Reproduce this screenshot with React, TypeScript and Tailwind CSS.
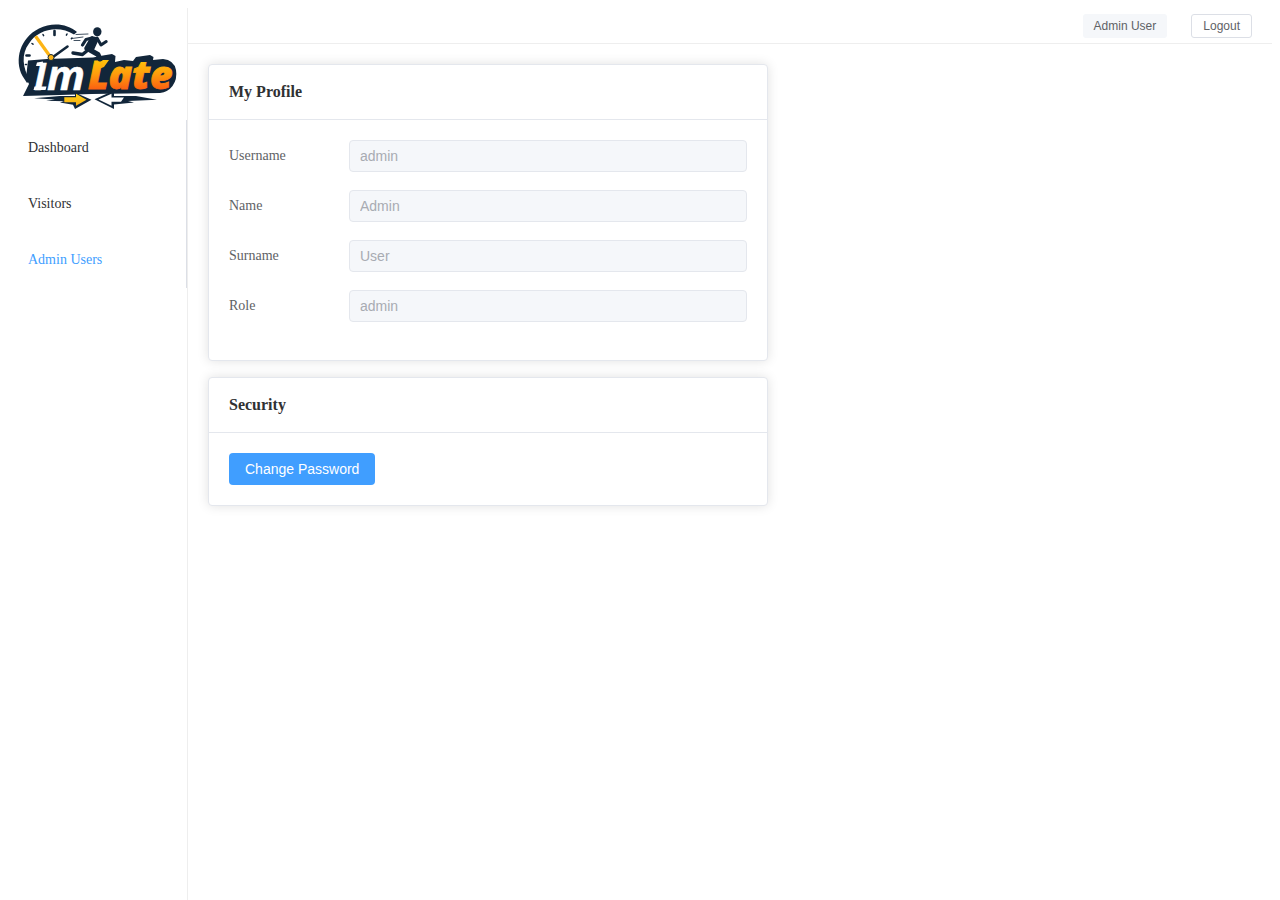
import React from "react";

const navItems = [
  { label: "Dashboard", active: false },
  { label: "Visitors", active: false },
  { label: "Admin Users", active: true },
];

const profileFields = [
  { id: "username", label: "Username", value: "admin" },
  { id: "name", label: "Name", value: "Admin" },
  { id: "surname", label: "Surname", value: "User" },
  { id: "role", label: "Role", value: "admin" },
];

function Logo() {
  return (
    <svg viewBox="8 8 179 112" className="block w-full" role="img" aria-label="ImLate">
      <defs>
        <linearGradient id="flame" gradientUnits="userSpaceOnUse" x1="0" y1="60" x2="0" y2="91">
          <stop offset="0" stopColor="#ffc20a" />
          <stop offset="0.45" stopColor="#ff9d0c" />
          <stop offset="1" stopColor="#fb5a12" />
        </linearGradient>
        <linearGradient id="gold" x1="0" y1="0" x2="0" y2="1">
          <stop offset="0" stopColor="#ffd21a" />
          <stop offset="1" stopColor="#f8ac10" />
        </linearGradient>
      </defs>

      {/* clock face */}
      <path
        d="M77 32 C67 23.500 52 22 39 28.500 C20 38 14 60 22.500 76 L27 83 L30 80 C22.500 68 21 54 29 43.500 C38 29 59 25 74 34.500 Z"
        fill="#12263a"
      />
      <g stroke="#12263a" strokeLinecap="round">
        <path d="M54.500 31v4" strokeWidth="2.600" />
        <path d="M43 34.500l.6 1.200M67 34l-.6 1.200M32 43.500l1 .7M72 38l-.6.6" strokeWidth="1.500" />
        <path d="M26.500 55.500h3" strokeWidth="2.600" />
        <path d="M25.500 64.500h1" strokeWidth="1.600" />
        <path d="M53 57L67.500 46.500" strokeWidth="2.600" />
      </g>

      {/* backing plate */}
      <path
        d="M28 60.500 L47 59 L93 57.500 L103 55.500 L112 54 L115.500 56 L115 62 L124 60 L133 61 L136 57 L150 55 L153.500 57 L153 60 L163 59 Q174 60 176 70 Q177.500 79 172.500 86 Q168 92 160 93 L92 94 L60 95 L23 96 L29 84 L26 78 Z"
        fill="#12263a"
      />
      <path d="M36.500 37.500L50.500 57" stroke="#fdb515" strokeWidth="3.200" strokeLinecap="square" />
      <circle cx="51" cy="57.500" r="3" fill="#fdb515" stroke="#12263a" strokeWidth="1" />

      {/* wordmark */}
      <g fill="#fff" stroke="#fff" strokeWidth="0.500" className="font-['Open_Sans',sans-serif] font-bold italic">
        <text x="34" y="89.500" className="text-[38px]">I</text>
        <text x="47" y="89.500" className="text-[42px]">m</text>
      </g>
      <path d="M34.500 86.500H46.500L45.500 90H33.500ZM37 62.500L43 61.500L42.500 66H36Z" fill="#fff" />
      <text
        x="88"
        y="89"
        fill="url(#flame)"
        stroke="url(#flame)"
        strokeWidth="0.800"
        className="font-['Open_Sans',sans-serif] text-[39px] font-extrabold italic"
      >
        Late
      </text>
      <path d="M94 65L98 63.500L103 60L109 60L104 67L99 69H93.500Z" fill="url(#flame)" />

      {/* runner */}
      <g fill="none" stroke="#12263a" strokeLinecap="round" strokeLinejoin="round">
        <ellipse cx="97.300" cy="31.800" rx="4.200" ry="4.500" fill="#12263a" stroke="none" />
        <path d="M92 38L97 39L92 50L86 48.500Z" fill="#12263a" strokeWidth="3.600" />
        <path d="M92 38L86 39.500L82.500 45" strokeWidth="3.200" />
        <path d="M97 38L101 45L106.200 41.500" strokeWidth="3" />
        <path d="M88 50L82.500 54.500L73 53" strokeWidth="3.400" />
        <path d="M90 50L98 54.500L100 59" strokeWidth="5" />
        <path d="M88 34L76 34.500M83 37L72 38.500M80 40.500L74 40.500" strokeWidth="0.800" />
      </g>

      {/* arrows */}
      <path d="M34 98.200L60 96L75 96L75 92.500L91.500 99.700L75 109L73 104.800L60 102.500L64 101.200L46 100.800L55 99.500Z" fill="#12263a" />
      <path d="M64.300 97.300H76V93.700L86.500 99.700L76 105.700V102.300H64.300Z" fill="url(#gold)" />
      <path d="M94.500 99.200L114 90.500V96L136 96L157 99.700L128 101L134 102.500L114 104.500V109Z" fill="#12263a" />
      <path d="M98.500 99.400L111.500 93.800V97.500H124L121 101.800H111.500V105.800Z" fill="#fff" />
    </svg>
  );
}

function Card({ title, children }: { title: string; children: React.ReactNode }) {
  return (
    <section className="rounded-[4px] border border-[#e4e7ed] bg-white shadow-[0_0_12px_rgba(0,0,0,0.12)]">
      <header className="border-b border-[#e4e7ed] px-5 py-[18px]">
        <h2 className="text-base leading-[18px] font-bold text-[#303133]">{title}</h2>
      </header>
      <div className="p-5">{children}</div>
    </section>
  );
}

export default function App() {
  return (
    <div className="flex min-h-screen bg-white px-2 pt-2 font-['Liberation_Serif',serif] text-[#303133]">
      <aside className="w-[180px] shrink-0 border-r border-[#eeeeee]">
        <Logo />
        <nav aria-label="Main" className="border-r border-[#dcdfe6]">
          <ul>
            {navItems.map((item) => (
              <li key={item.label}>
                <a
                  href="#"
                  aria-current={item.active ? "page" : undefined}
                  className={`flex h-14 items-center px-5 text-sm ${item.active ? "text-[#409eff]" : "text-[#303133]"}`}
                >
                  {item.label}
                </a>
              </li>
            ))}
          </ul>
        </nav>
      </aside>

      <div className="min-w-0 flex-1">
        <header className="flex h-9 items-center justify-end gap-6 border-b border-[#eeeeee] px-5 font-['Liberation_Sans',sans-serif] text-xs text-[#606266]">
          <button type="button" className="h-6 rounded-[3px] bg-[#f5f7fa] px-[11px]">
            Admin User
          </button>
          <button type="button" className="h-6 rounded-[3px] border border-[#dcdfe6] bg-white px-[11px]">
            Logout
          </button>
        </header>

        <main className="p-5">
          <div className="flex max-w-[560px] flex-col gap-4">
            <Card title="My Profile">
              <form>
                {profileFields.map((field) => (
                  <div key={field.id} className="mb-[18px] flex">
                    <label htmlFor={field.id} className="w-[120px] shrink-0 text-sm leading-8 text-[#606266]">
                      {field.label}
                    </label>
                    <input
                      id={field.id}
                      type="text"
                      disabled
                      defaultValue={field.value}
                      className="h-8 min-w-0 flex-1 rounded-[4px] border border-[#e4e7ed] bg-[#f5f7fa] px-[10px] font-['Liberation_Sans',sans-serif] text-sm text-[#a8abb2]"
                    />
                  </div>
                ))}
              </form>
            </Card>
            <Card title="Security">
              <button
                type="button"
                className="block h-8 rounded-[4px] bg-[#409eff] px-4 font-['Liberation_Sans',sans-serif] text-sm text-white"
              >
                Change Password
              </button>
            </Card>
          </div>
        </main>
      </div>
    </div>
  );
}
